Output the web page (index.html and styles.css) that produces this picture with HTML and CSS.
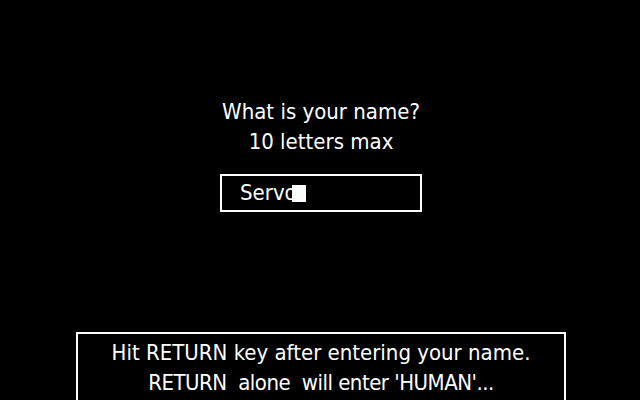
FILE: index.html
```html
<!DOCTYPE html>
<html>
<head>
<meta charset="utf-8">
<link rel="stylesheet" href="styles.css">
</head>
<body>
<div class="screen">
  <div class="prompt">
    <div class="line">What is your name?</div>
    <div class="line">10 letters max</div>
  </div>
  <div class="entry"><span class="typed">Servo</span><span class="cursor"></span></div>
  <div class="help">
    <div class="line">Hit RETURN key after entering your name.</div>
    <div class="line tight">RETURN  alone  will enter 'HUMAN'...</div>
  </div>
</div>
</body>
</html>
```
FILE: styles.css
```css
html, body {
  margin: 0;
  padding: 0;
  background: #000;
}
.screen {
  width: 640px;
  height: 400px;
  overflow: hidden;
  box-sizing: border-box;
  padding: 97px 0 0 2px;
  display: flex;
  flex-direction: column;
  align-items: center;
  color: #fff;
  font-family: "DejaVu Sans Condensed", "DejaVu Sans", sans-serif;
  font-stretch: condensed;
  font-size: 22px;
}
.line {
  line-height: 30px;
  height: 30px;
  text-align: center;
  white-space: pre;
}
.tight {
  letter-spacing: -0.5px;
}
.prompt {
  display: flex;
  flex-direction: column;
  align-items: center;
}
.entry {
  margin-top: 17px;
  width: 202px;
  height: 38px;
  box-sizing: border-box;
  border: 2px solid #fff;
  padding-left: 18px;
  line-height: 34px;
  white-space: pre;
}
.cursor {
  display: inline-block;
  width: 14px;
  height: 17px;
  background: #fff;
  vertical-align: -2px;
  margin-left: -5px;
}
.help {
  margin-top: 120px;
  width: 490px;
  box-sizing: border-box;
  border: 2px solid #fff;
  border-bottom: none;
  padding: 4px 0 6px;
  display: flex;
  flex-direction: column;
  align-items: center;
}
```
